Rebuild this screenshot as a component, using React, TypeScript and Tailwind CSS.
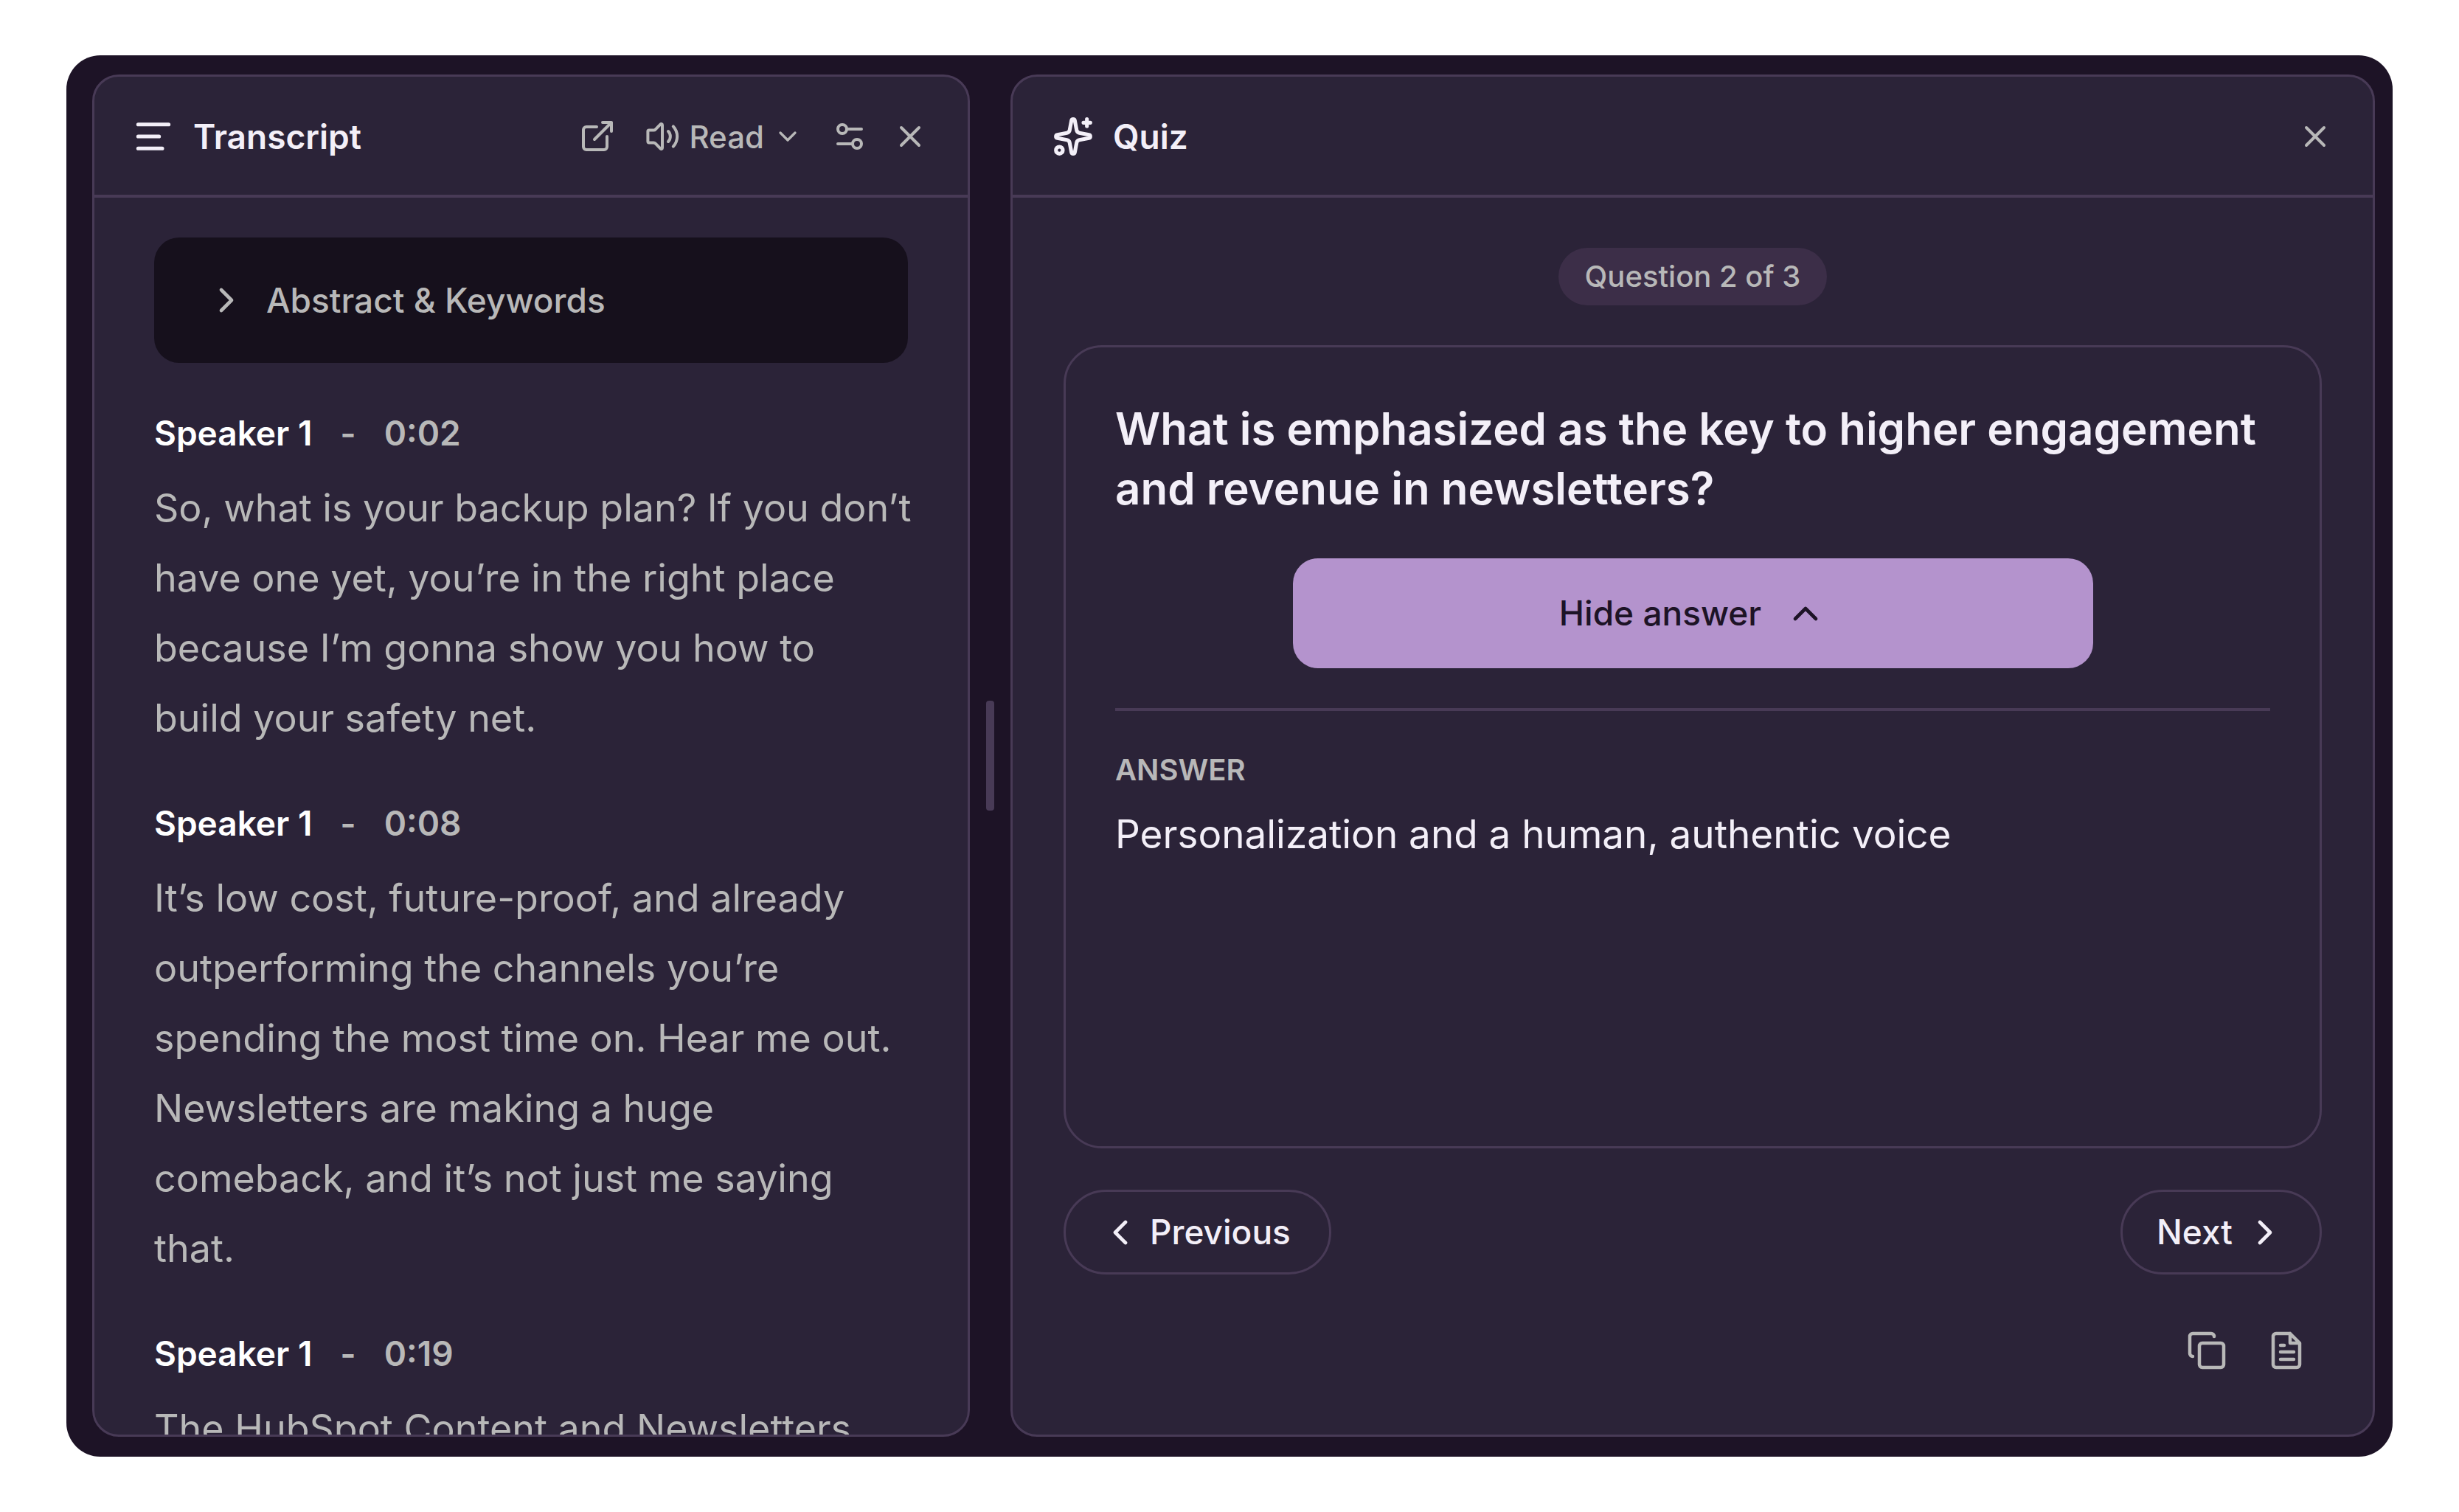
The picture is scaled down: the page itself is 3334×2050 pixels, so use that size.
import { useState } from 'react'
import type { ReactNode } from 'react'

type Segment = { time: string; text: string }

// Line breaks come with the captions and are kept when drawn
const segments: Segment[] = [
  {
    time: '0:02',
    text: 'So, what is your backup plan? If you don’t\nhave one yet, you’re in the right place\nbecause I’m gonna show you how to\nbuild your safety net.',
  },
  {
    time: '0:08',
    text: 'It’s low cost, future-proof, and already\noutperforming the channels you’re\nspending the most time on. Hear me out.\nNewsletters are making a huge\ncomeback, and it’s not just me saying\nthat.',
  },
  {
    time: '0:19',
    text: 'The HubSpot Content and Newsletters',
  },
]

function Icon({ className, strokeWidth = 2, children }: { className: string; strokeWidth?: number; children: ReactNode }) {
  return (
    <svg
      aria-hidden="true"
      viewBox="0 0 24 24"
      fill="none"
      stroke="currentColor"
      strokeWidth={strokeWidth}
      strokeLinecap="round"
      strokeLinejoin="round"
      className={className}
    >
      {children}
    </svg>
  )
}

function CloseButton({ label }: { label: string }) {
  return (
    <button type="button" aria-label={label} className="cursor-pointer text-[#b8b8b8]">
      <Icon className="size-12">
        <path d="M18 6 6 18M6 6l12 12" />
      </Icon>
    </button>
  )
}

function TranscriptPanel() {
  return (
    <section className="flex min-h-0 min-w-0 flex-col overflow-hidden rounded-[36px] border-[3px] border-[#483a56] bg-[#2b2338]">
      <header className="flex h-[164px] shrink-0 items-center border-b-4 border-[#483a56] px-[54px] pt-[2px]">
        <Icon className="size-[52px]" strokeWidth={2.4}>
          <path d="M2.500 4.500h19M2.500 12h13M2.500 19.500h15" />
        </Icon>
        <h2 className="ml-[28px] text-[46px] font-semibold">Transcript</h2>
        <div className="ml-auto flex items-center text-[#b8b8b8]">
          <button type="button" aria-label="Open in new window" className="cursor-pointer">
            <Icon className="size-12">
              <path d="M15.500 2.500h6v6M10 14 21.500 2.500M18.500 12v7a2 2 0 0 1-2 2h-12a2 2 0 0 1-2-2V7.500a2 2 0 0 1 2-2h7" />
            </Icon>
          </button>
          <button type="button" className="ml-10 flex cursor-pointer items-center text-[42px] font-medium">
            <Icon className="size-12">
              <path d="M12 4.200a.7.7 0 0 0-1.200-.5L7.400 7.200A1.800 1.800 0 0 1 6 7.800H3a.8.8 0 0 0-.8.8v6.800a.8.8 0 0 0 .8.8h3a1.800 1.800 0 0 1 1.400.6l3.400 3.500a.7.7 0 0 0 1.200-.5zM16 8.500a5 5 0 0 1 0 7M19.400 5.200a10 10 0 0 1 0 13.600" />
            </Icon>
            <span className="ml-3">Read</span>
            <Icon className="ml-3 size-10">
              <path d="m6 9 6 6 6-6" />
            </Icon>
          </button>
          <button type="button" aria-label="Transcript settings" className="ml-10 cursor-pointer">
            <Icon className="size-12">
              <circle cx="7" cy="7" r="3" />
              <circle cx="17" cy="17" r="3" />
              <path d="M10 7h10M4 17h10" />
            </Icon>
          </button>
          <div className="ml-[34px] flex">
            <CloseButton label="Close transcript" />
          </div>
        </div>
      </header>

      <div className="min-h-0 flex-1 overflow-hidden px-[81px] pt-[54px]">
        <button
          type="button"
          aria-expanded={false}
          className="flex h-[170px] w-full cursor-pointer items-center rounded-[34px] bg-[#16101c] pl-[70px] text-[46px] font-medium text-[#b8b8b8]"
        >
          <Icon className="size-14">
            <path d="m9 18 6-6-6-6" />
          </Icon>
          <span className="ml-[26px]">Abstract &amp; Keywords</span>
        </button>
        {segments.map((segment) => (
          <article key={segment.time} className="mt-[65px]">
            <h3 className="flex gap-[38px] text-[46px] leading-[60px] font-semibold text-[#b8b8b8]">
              <span className="text-white">Speaker 1</span>
              <span>-</span>
              <span>{segment.time}</span>
            </h3>
            <p className="-mr-10 mt-6 text-[52px] leading-[95px] whitespace-pre-line text-[#b8b8b8]">{segment.text}</p>
          </article>
        ))}
      </div>
    </section>
  )
}

function QuizPanel() {
  const [showAnswer, setShowAnswer] = useState(true)

  return (
    <section className="flex min-h-0 min-w-0 flex-col overflow-hidden rounded-[36px] border-[3px] border-[#483a56] bg-[#2b2338]">
      <header className="flex h-[164px] shrink-0 items-center border-b-4 border-[#483a56] px-[54px] pt-[2px]">
        <Icon className="size-14" strokeWidth={2.2}>
          <path d="M11.017 2.814a1 1 0 0 1 1.966 0l1.051 5.558a2 2 0 0 0 1.594 1.594l5.558 1.051a1 1 0 0 1 0 1.966l-5.558 1.051a2 2 0 0 0-1.594 1.594l-1.051 5.558a1 1 0 0 1-1.966 0l-1.051-5.558a2 2 0 0 0-1.594-1.594l-5.558-1.051a1 1 0 0 1 0-1.966l5.558-1.051a2 2 0 0 0 1.594-1.594zM20 2v4M22 4h-4" />
          <circle cx="4" cy="20" r="2" />
        </Icon>
        <h2 className="ml-[26px] text-[46px] font-semibold">Quiz</h2>
        <div className="ml-auto flex">
          <CloseButton label="Close quiz" />
        </div>
      </header>

      <div className="flex min-h-0 flex-1 flex-col px-[69px] pt-[68px] pb-[88px]">
        <p className="self-center rounded-full bg-[#3c2e48] px-9 text-[40px] leading-[78px] font-medium text-[#b8b8b8]">
          Question 2 of 3
        </p>

        <div className="mt-[54px] flex flex-1 flex-col rounded-[52px] border-[3px] border-[#483a56] px-[67px] pt-[70px]">
          <h3 className="text-[60px] leading-[81px] font-semibold">
            What is emphasized as the key to higher engagement and revenue in newsletters?
          </h3>
          <button
            type="button"
            aria-expanded={showAnswer}
            onClick={() => setShowAnswer(!showAnswer)}
            className="mt-[54px] flex h-[149px] w-[1085px] max-w-full cursor-pointer items-center justify-center gap-8 self-center rounded-[34px] bg-[#b493cd] text-[46px] font-medium text-[#1d1326]"
          >
            {showAnswer ? 'Hide answer' : 'Show answer'}
            <Icon className="size-14">
              <path d="m18 15-6-6-6 6" />
            </Icon>
          </button>
          {showAnswer && (
            <div className="mt-[54px] border-t-4 border-[#483a56] pt-[50px]">
              <h4 className="text-[40px] leading-[60px] font-semibold text-[#b8b8b8]">ANSWER</h4>
              <p className="mt-3 text-[53px] leading-[90px]">Personalization and a human, authentic voice</p>
            </div>
          )}
        </div>

        <div className="mt-14 flex justify-between text-[46px] font-medium">
          <button type="button" className="flex h-[115px] cursor-pointer items-center gap-3 rounded-full border-[3px] border-[#483a56] pr-[52px] pl-[46px]">
            <Icon className="size-14">
              <path d="m15 18-6-6 6-6" />
            </Icon>
            Previous
          </button>
          <button type="button" className="flex h-[115px] cursor-pointer items-center gap-4 rounded-full border-[3px] border-[#483a56] px-[46px]">
            Next
            <Icon className="size-14">
              <path d="m9 18 6-6-6-6" />
            </Icon>
          </button>
        </div>

        <div className="mt-[77px] flex justify-end gap-14 pr-[22px] text-[#b8b8b8]">
          <button type="button" aria-label="Copy" className="cursor-pointer">
            <svg aria-hidden="true" viewBox="0 0 52 52" fill="none" stroke="currentColor" strokeWidth="4.500" strokeLinecap="round" className="size-[52px]">
              <rect x="16" y="16" width="33" height="33" rx="4" />
              <path d="M7 34a4 4 0 0 1-4-4V7a4 4 0 0 1 4-4h25a4 4 0 0 1 4 4" />
            </svg>
          </button>
          <button type="button" aria-label="Save as note" className="cursor-pointer">
            <svg aria-hidden="true" viewBox="0 0 52 52" fill="none" stroke="currentColor" strokeWidth="4.500" strokeLinecap="round" strokeLinejoin="round" className="size-[52px]">
              <path d="M31 3H12a4 4 0 0 0-4 4v38a4 4 0 0 0 4 4h28a4 4 0 0 0 4-4V16L31 3v13h13M18 19h5M18 28h18M18 38h18" />
            </svg>
          </button>
        </div>
      </div>
    </section>
  )
}

export default function App() {
  return (
    <div className="flex h-screen bg-white px-[90px] py-[75px] font-['Inter',sans-serif] text-[#f3eff8]">
      <main className="grid min-w-0 flex-1 grid-cols-[119fr_55px_185fr] grid-rows-[minmax(0,1fr)] rounded-[46px] bg-[#1d1326] pt-[26px] pr-[24px] pb-[27px] pl-[35px]">
        <TranscriptPanel />
        <div role="separator" aria-orientation="vertical" className="flex cursor-col-resize items-center justify-center">
          <div className="h-[149px] w-[11px] rounded-sm bg-[#483a56]" />
        </div>
        <QuizPanel />
      </main>
    </div>
  )
}
